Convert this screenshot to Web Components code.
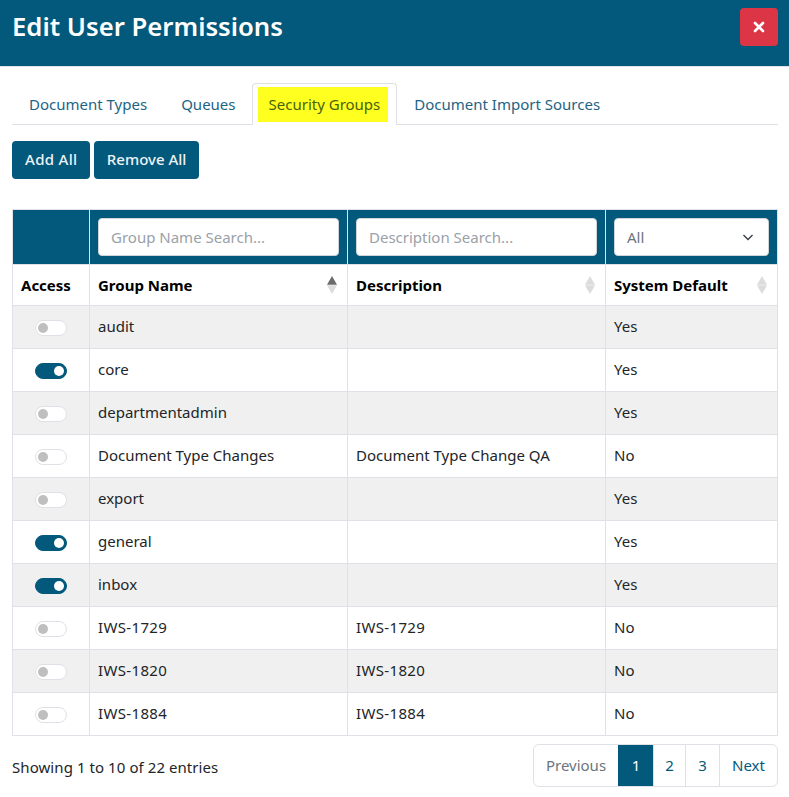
<!DOCTYPE html>
<html lang="en"><head><meta charset="utf-8"><title>Edit User Permissions</title>
<style>
html,body{margin:0;padding:0;background:#fff;height:797px;overflow:hidden}
body{font-family:"Noto Sans","Open Sans",sans-serif;font-size:15px;color:#212529;--brand:#02597c;--line:#dee2e6}
</style></head><body>
<perm-dialog>
  <span slot="title">Edit User Permissions</span>
  <perm-tabs slot="tabs"></perm-tabs>
  <div slot="actions"><perm-btn style="--pad:13px;--ls:.3px">Add All</perm-btn><perm-btn style="--pad:12.5px">Remove All</perm-btn></div>
  <perm-table slot="table"></perm-table>
  <span slot="info">Showing 1 to 10 of 22 entries</span>
  <perm-pager slot="pager"></perm-pager>
</perm-dialog>
<script>
const def=(n,html,init)=>customElements.define(n,class extends HTMLElement{
  constructor(){super();this.attachShadow({mode:'open'}).innerHTML=html;}
  connectedCallback(){init&&init.call(this,this.shadowRoot);}
});
def('perm-dialog',`<style>
:host{display:block}
header{background:var(--brand);border-bottom:1px solid var(--line);display:flex;justify-content:space-between;padding:8px 11px 0 12px;height:58px}
h1{margin:0;font-size:25.7px;line-height:37px;font-weight:600;color:#fff}
button{width:38px;height:38px;border:0;border-radius:4px;background:#dc3545;padding:0;display:flex;align-items:center;justify-content:center}
main{padding:16px 11px 0 12px}
.actions{margin-top:16px;height:38px}
.table{margin-top:30px}
footer{display:flex;justify-content:space-between;align-items:center;margin-top:8px;height:42px}
.info{font-size:15px;letter-spacing:.07px;position:relative;top:2px}
</style>
<header><h1><slot name="title"></slot></h1><button aria-label="Close"><svg width="12" height="12" viewBox="0 0 12 12"><path d="M2 2l8 8M10 2l-8 8" stroke="#fff" stroke-width="2.6" stroke-linecap="round" fill="none"/></svg></button></header>
<main><slot name="tabs"></slot>
<div class="actions"><slot name="actions"></slot></div>
<div class="table"><slot name="table"></slot></div>
<footer><span class="info"><slot name="info"></slot></span><slot name="pager"></slot></footer></main>`);
def('perm-tabs',`<style>
:host{display:flex;height:41px;border-bottom:1px solid var(--line);font-size:15px;color:#1d6485}
a{box-sizing:border-box;height:42px;padding:0 16px 2px;display:flex;align-items:center;border:1px solid transparent;border-bottom:0;border-radius:4px 4px 0 0;white-space:nowrap}
a.on{border-color:var(--line);background:#fff;padding:3px 8px 1px 5px;align-items:stretch;color:#47620f;margin:0 0 -1px -1px}
a.on span{background:#ffff20;padding:0 8px 2px 11px;display:flex;align-items:center;height:35px;box-sizing:border-box}
</style><a>Document Types</a><a>Queues</a><a class="on"><span>Security Groups</span></a><a>Document Import Sources</a>`);
def('perm-btn',`<style>
:host{display:inline-block;margin-right:4px}
button{font:500 15px "Noto Sans","Open Sans",sans-serif;letter-spacing:var(--ls,0);height:38px;padding:0 var(--pad,13px) 2px;border:0;border-radius:4px;background:var(--brand);color:#eef3f6}
</style><button><slot></slot></button>`);
def('perm-toggle',`<style>
:host{display:block;width:32px;height:16px;box-sizing:border-box;border:1px solid var(--line);border-radius:8px;background:#fff;position:relative;margin:auto}
:host([on]){background:var(--brand);border-color:var(--brand)}
i{position:absolute;left:2px;top:2px;width:10px;height:10px;border-radius:50%;background:#bfbfbf}
:host([on]) i{left:18px;background:#fff}
</style><i></i>`);
def('perm-sort',`<style>:host{display:block;width:10px;height:18px}svg{display:block}</style>
<svg width="10" height="18" viewBox="0 0 10 18"><path class="u" d="M5 0L10 8.800H0Z"/><path class="d" d="M0 9.200H10L5 18Z" fill="#dcdcdc"/></svg>`,function(r){r.querySelector('.u').setAttribute('fill',this.hasAttribute('asc')?'#6b6b6b':'#dcdcdc');});
const rows=[[0,'audit','','Yes'],[1,'core','','Yes'],[0,'departmentadmin','','Yes'],[0,'Document Type Changes','Document Type Change QA','No'],[0,'export','','Yes'],[1,'general','','Yes'],[1,'inbox','','Yes'],[0,'IWS-1729','IWS-1729','No'],[0,'IWS-1820','IWS-1820','No'],[0,'IWS-1884','IWS-1884','No']];
const cell=s=>`<td${s.startsWith('IWS')?' class="i"':''}>${s}</td>`;
def('perm-table',`<style>
:host{display:block;font-size:15px;color:#212529}
table{border-collapse:collapse;width:765px;table-layout:fixed}
td,th{border:1px solid var(--line);padding:0 8px;text-align:left;box-sizing:border-box;height:43px}
td{padding-bottom:2px}
td.t{padding:2px 0 0}
td.i{letter-spacing:.35px}
thead tr:first-child th{background:var(--brand);height:55px;padding:0 8px}
th{font-weight:700;color:#000}
thead tr:nth-child(2) th{height:41px}
.h{display:flex;justify-content:space-between;align-items:center}
.h perm-sort{margin-right:2px}
tbody tr:nth-child(odd){background:#f0f0f0}
input,.sel{box-sizing:border-box;width:100%;height:38px;border:1px solid #ced4da;border-radius:4px;padding:0 12px;font:15px "Noto Sans","Open Sans",sans-serif;background:#fff;display:block;color:#6c757d;outline:0}
input::placeholder{color:#9aa1a8;opacity:1}
.sel{display:flex;align-items:center;justify-content:space-between;font-weight:400;padding-right:15px}
</style><table><colgroup><col style="width:77px"><col style="width:258px"><col style="width:258px"><col style="width:172px"></colgroup>
<thead><tr><th></th><th><input placeholder="Group Name Search..."></th><th><input placeholder="Description Search..."></th><th><div class="sel">All<svg width="10" height="7" viewBox="0 0 10 7"><path d="M.5 1l4.500 4.500L9.500 1" fill="none" stroke="#343a40" stroke-width="1.3"/></svg></div></th></tr>
<tr><th>Access</th><th><div class="h">Group Name<perm-sort asc></perm-sort></div></th><th><div class="h">Description<perm-sort></perm-sort></div></th><th><div class="h">System Default<perm-sort></perm-sort></div></th></tr></thead>
<tbody></tbody></table>`,function(r){r.querySelector('tbody').innerHTML=rows.map(x=>`<tr><td class="t"><perm-toggle ${x[0]?'on':''}></perm-toggle></td>${cell(x[1])}${cell(x[2])}<td>${x[3]}</td></tr>`).join('');});
def('perm-pager',`<style>
:host{display:flex;height:43px;box-sizing:border-box;border:1px solid var(--line);border-radius:6px;font-size:15px;color:#02597c;overflow:hidden}
a{display:flex;align-items:center;justify-content:center;box-sizing:border-box;border-left:1px solid var(--line);width:34px}
a.p{border-left:0;color:#6c757d;width:84px}
a.on{background:var(--brand);color:#fff;border-color:var(--brand);width:35px}
a.n{width:58px}
</style><a class="p">Previous</a><a class="on">1</a><a style="width:32px">2</a><a>3</a><a class="n">Next</a>`);
</script>
</body></html>
